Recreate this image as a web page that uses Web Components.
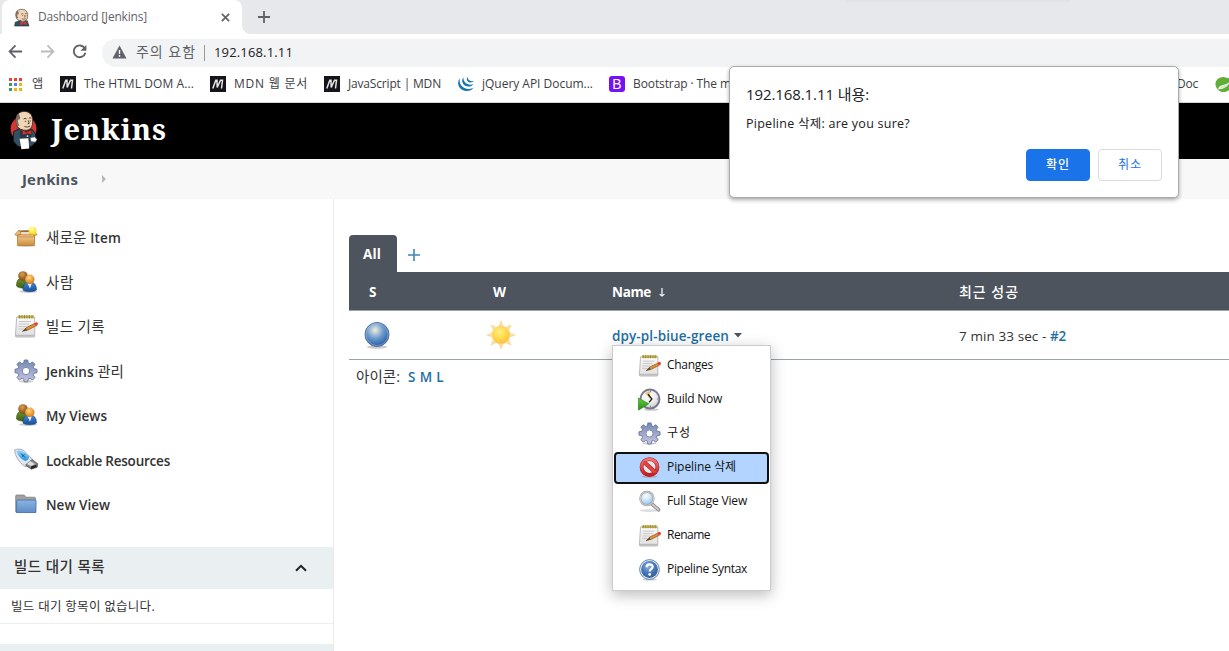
<!DOCTYPE html>
<html lang="ko"><head><meta charset="utf-8"><title>Dashboard [Jenkins]</title>
<style>
html,body{margin:0;width:1229px;height:651px;overflow:hidden;background:#fff}
body{font-family:"Open Sans","Noto Sans CJK KR",sans-serif;font-size:13.5px;color:#333}
</style></head><body>
<jenkins-window></jenkins-window>
<script>
const gearPath='M10.3 1h3.4l.6 3 1.7.7 2.6-1.8 2.4 2.4-1.8 2.6.7 1.7 3.1.7v3.4l-3.1.6-.7 1.7 1.8 2.6-2.4 2.4-2.6-1.8-1.7.7-.6 3h-3.4l-.6-3-1.7-.7-2.6 1.8L3 18.600l1.800-2.600-.7-1.700L1 13.700v-3.400l3.100-.7.7-1.700L3 5.300l2.400-2.400L8 4.700 9.700 4z';
const grad=(id,a,b,extra='x1="0" y1="0" x2="0" y2="1"')=>`<linearGradient id="${id}" ${extra}><stop stop-color="${a}"/><stop offset="1" stop-color="${b}"/></linearGradient>`;
const ball=(id,a,b,c)=>`<radialGradient id="${id}" cx=".42" cy=".32" r=".7"><stop stop-color="${a}"/><stop offset=".5" stop-color="${b}"/><stop offset="1" stop-color="${c}"/></radialGradient>`;
const butlerHead=`<path d="M8.500 18C6 12 6.500 5 10.500 2.200 15-.7 21.500.3 24 4c2.300 3.300 2.300 8.500 1.500 12-.6 3.500-3 6-6.500 6.300-5 .3-9-1.500-10.500-4.300z" fill="#f0d6b7" stroke="#3a2b22" stroke-width="1"/><path d="M8.300 17C5.500 12 6.500 5 10 2.800l1.800 5-1.300 2.400-1.400-.4.300 4 1.400 3.200z" fill="#7d6c60"/><path d="M15.500 9.300q1.800-1.600 3.500-.1M21.500 8.500q1.400-1.300 2.800 0M17 12h1.500M22.500 11.500h1.300M20.800 11l1.200 3.300-1.800.6M16.500 18q3.500 1.600 6.500-.6" stroke="#4a352b" stroke-width="1.100" fill="none"/>`;
const ICONS={
logo:['0 0 32 44',`<circle cx="15.500" cy="20.500" r="14.800" fill="#d33833"/><path d="M4 24l7-4 6 4 8-3 4 5 1 10-6 5H9L4 35z" fill="#335061" stroke="#101820"/><path d="M11 21l8 6 6-5-1 13H12z" fill="#22384a"/>${butlerHead}<path d="M14 22l5 3 5-3 .7 5-5.200-1-5 1.700z" fill="#d33833" stroke="#7d1c19" stroke-width=".6"/><path d="M11 32l10-.5 1 12-9 .7z" fill="#fff"/><path d="M23 31l5-1 3 3-2 3-5-.6z" fill="#fff" stroke="#444" stroke-width=".5"/><circle cx="20" cy="29" r="1" fill="#eee"/>`],
fav:['4 0 24 31',`${butlerHead}<path d="M6 24l8-3 4 3 7-3 3 10H5z" fill="#335061" stroke="#202b32"/><path d="M14 22l5 3 5-3v7l-5-2-5 3z" fill="#d33833"/>`],
close:['0 0 10 10','<path d="M1 1l8 8M9 1l-8 8" stroke="#5f6368" stroke-width="1.900"/>'],
plus:['0 0 12 12','<path d="M6 0v12M0 6h12" stroke="#5f6368" stroke-width="1.800"/>'],
addview:['0 0 12 12','<path d="M6 0v12M0 6h12" stroke="#3d88b4" stroke-width="1.600"/>'],
back:['0 0 16 16','<path d="M15 8H2M8 1.500L1.700 8 8 14.500" fill="none" stroke="#5f6368" stroke-width="1.900"/>'],
fwd:['0 0 16 16','<path d="M1 8h13M8 1.500L14.300 8 8 14.500" fill="none" stroke="#babcbe" stroke-width="1.900"/>'],
reload:['0 0 16 16','<path d="M13.600 4.600A6.300 6.300 0 1 0 14.300 9.300" fill="none" stroke="#5f6368" stroke-width="2"/><path d="M15.300 1v6.300H9z" fill="#5f6368"/>'],
warn:['0 0 16 14','<path d="M8 .5L15.500 13.500H.5z" fill="#5f6368"/><path d="M8 5v4M8 10v1.800" stroke="#fff" stroke-width="1.500"/>'],
apps:['0 0 13 13','<path d="M0 0h3v3H0zM5 0h3v3H5zM10 0h3v3h-3z" fill="#ea4335"/><path d="M0 5h3v3H0zM0 10h3v3H0z" fill="#34a060"/><path d="M5 5h3v3H5z" fill="#4285f4"/><path d="M10 5h3v3h-3zM5 10h3v3H5zM10 10h3v3h-3z" fill="#fbae0b"/>'],
mdn:['0 0 16 16','<path d="M0 0h16v16H0z" fill="#15141a"/><path d="M2.800 12.500L5.800 4.300 7 4.300 7.200 11.500 10.500 4.300 12.500 4.300 11.500 12.500" fill="none" stroke="#e4e4e4" stroke-width="1.500"/>'],
jquery:['0 0 16 16','<g fill="#1876ad"><path d="M1.800 2.300C-1.200 6.500.2 11.500 4 13.800c4 2.300 9.200 1.400 11.800-2.300-3 1.700-6.500 2-9.300.6C2.800 10.200 1 6.700 1.800 2.300z"/><path d="M5.300 1.300C3.300 4.300 4.200 8 7.200 9.800c3 1.600 6.500.8 8.500-1.800-2.200 1-4.300 1-6.200.1C6.700 6.800 5.200 4.500 5.300 1.300z"/><path d="M9.500.8C8.200 2.500 8.600 4.900 10.600 6c1.900 1 4.100.5 5.200-1.200-1.400.5-2.700.5-3.800-.1C10.400 3.900 9.500 2.600 9.500.8z"/></g>'],
spring:['0 0 18 18','<path d="M16.500 1c2 7 .8 14-5 15.700C6 18.300.7 14 .5 8.500.4 3 7-.8 12 1.800c2 .9 3.300.5 4.500-.8z" fill="#5fae35"/><path d="M3.200 14C8.500 14.500 14.500 11.500 16.300 4.800 14 8.500 11 8.800 7.500 9.800c-2.500.8-4 2.200-4.300 4.200z" fill="#fff"/><path d="M5 13.200C9.500 13 13 11 15 7.500 13 9.800 10.500 10.200 8 11c-1.500.5-2.500 1.200-3 2.200z" fill="#5fae35" opacity=".35"/>'],
box:['0 0 24 24',`<defs>${grad('b','#f6d8a8','#cf8b36')}${ball('y','#ffffd0','#fff24d','#f5d400')}</defs><ellipse cx="12" cy="20.500" rx="10" ry="1.500" fill="#ccc"/><path d="M3.500 9h17v10.500q0 1-1 1h-15q-1 0-1-1z" fill="url(#b)" stroke="#b57a35" stroke-width=".8"/><path d="M5 5.500l14-.4 2 5H3z" fill="#9b6a34"/><path d="M7 7h9v3H7z" fill="#e8dcc9"/><path d="M5 5L.7 9.500l3 1.800L7 8zM18 5l5.300 4.500-3 1.800L17 8zM3.500 9.700h17V12h-17z" fill="#e9bb7d" stroke="#bd8542" stroke-width=".7"/><circle cx="18.500" cy="5.700" r="4" fill="url(#y)" opacity=".95"/>`],
people:['0 0 24 24',`<defs>${ball('h1','#d9a25e','#a8702c','#7d4e17')}${ball('h2','#ffd592','#f0a73f','#d07a14')}${grad('g','#73913a','#3d6310')}${grad('u','#4a87cc','#184f9b')}</defs><ellipse cx="14" cy="21.500" rx="9" ry="1.400" fill="#ccc"/><path d="M2.500 16c0-6 2-8 6.500-8 4 0 7 3 7 8-2 2.700-11 3-13.500 0z" fill="url(#g)" stroke="#3d5c12" stroke-width=".6"/><circle cx="9" cy="6" r="4.800" fill="url(#h1)"/><path d="M9 20c0-6 2.500-8 6.800-8 4.500 0 6.700 3 6.700 8-2.300 2.200-11.500 2.200-13.500 0z" fill="url(#u)" stroke="#174783" stroke-width=".6"/><path d="M13.600 13.500h4.200l-1.800 5z" fill="#e4edf8"/><circle cx="15.800" cy="9.300" r="4.700" fill="url(#h2)"/>`],
note:['0 0 24 24',`<defs>${grad('n','#fafafa','#dfdfdf')}</defs><path d="M2.700 3h18v19q0 1-1 1H2.400q-1.200 0-1-1.300z" fill="url(#n)" stroke="#aaa" stroke-width=".8"/><path d="M1.700 20.700h19v1.800h-19z" fill="#bbb"/><path d="M4 1.500h16v2.700H4z" fill="#c4b450"/><path d="M5.500 1v3.500M8 1v3.500M10.500 1v3.500M13 1v3.500M15.500 1v3.500M18 1v3.500" stroke="#8a7d2c" stroke-width=".8"/><path d="M5 7.500h12M5 10h10M4.700 12.500h8M4.500 15h5" stroke="#c2c2c2" stroke-width=".9"/><path d="M8.500 17.300l4.200-4 8.500-4 1.400 2.300-8.500 4.300z" fill="#df8c35" stroke="#875218" stroke-width=".7"/><path d="M8.300 17.400l3.500-3.300 1.400 2.200z" fill="#554a39"/><circle cx="22.300" cy="9.800" r="1.600" fill="#ed3935"/>`],
gear:['0 0 24 24',`<defs>${grad('r','#7189b2','#cac5e5')}</defs><ellipse cx="12" cy="22.400" rx="7" ry="1.300" fill="#ccc"/><path d="${gearPath}" fill="url(#r)" stroke="#667596" stroke-width=".9"/><circle cx="12" cy="12" r="3.700" fill="#fff" stroke="#7c87a7"/>`],
usb:['0 0 24 24',`<defs>${grad('k','#8bd5ff','#2499e0')}</defs><path d="M.6 2Q4 0 9.500 2.300l9.500 9.500-4 6.700-4 .2Q1 11 .6 2z" fill="#e3e5ee" stroke="#9a9bb1" stroke-width=".8"/><path d="M2.500 3q4.500-1.500 8 1.500l4.500 4q0 4-4 4.500Q4 9.500 2.500 3z" fill="url(#k)"/><path d="M7 5.500l4 4M10.500 6.500l-2.500 2" stroke="#155582" stroke-width="1"/><path d="M18 11.500l5.700 4.200-.5 3.500-6 2L11.500 17z" fill="#888" stroke="#444" stroke-width=".7"/><path d="M16 13l5 3-4 2-4-2z" fill="#ddd"/><path d="M17 18.500l5.500-1.700v2.300L17 21z" fill="#222"/>`],
folder:['0 0 24 24',`<defs>${grad('f','#8bb4e0','#5d8ec8')}</defs><path d="M1.700 4q0-1 1-1h7q1 0 1.400 1l.5 1.200h9q.8 0 .8.800v14H1.700z" fill="#a1a1a1" stroke="#777" stroke-width=".7"/><path d="M3.500 8h18.300q.3 0 .3.700l-.2 11.800H2.500L2.800 8.700q.1-.7.700-.7z" fill="url(#f)" stroke="#3e70ad" stroke-width=".8"/>`],
clock:['0 0 24 24',`<defs>${ball('c','#fff','#f0f0ed','#ccccc8')}${grad('t','#65cf3c','#258b12')}</defs><ellipse cx="14" cy="22.500" rx="8" ry="1.200" fill="#ccc"/><circle cx="12.500" cy="11.500" r="9.900" fill="url(#c)" stroke="#777795" stroke-width="2"/><path d="M12.500 11.500L7.500 5.500q2.500-2.200 5-2z" fill="#e6c56a"/><path d="M10.500 6.500l4 5-3 3.500" fill="none" stroke="#222" stroke-width="1.400"/><path d="M13 3v1.600M20 11.500h1.500M13 18.500v1.500" stroke="#777"/><path d="M.5 10.500l10.700 6-10.700 6.600z" fill="url(#t)" stroke="#26841b" stroke-width=".7"/>`],
deny:['0 0 24 24',`<defs>${grad('d','#f27670','#c71e1e')}</defs><ellipse cx="12" cy="21.500" rx="8" ry="1.500" fill="#999" opacity=".6"/><circle cx="12" cy="11.500" r="8.300" fill="#e4e7ef" stroke="#a92020" stroke-width="4"/><path d="M6 6l12 11" stroke="#a92020" stroke-width="4.300"/><circle cx="12" cy="11.500" r="8.300" fill="none" stroke="url(#d)" stroke-width="3"/><path d="M6 6l12 11" stroke="#e04440" stroke-width="3.300"/>`],
lens:['0 0 24 24',`<defs>${ball('l','#fff','#c9e3fa','#82b8ec')}</defs><ellipse cx="12" cy="21.500" rx="10" ry="1.500" fill="#ddd"/><path d="M14 14l7.500 6.700" stroke="#777" stroke-width="3.600" stroke-linecap="round"/><path d="M14 14l7.500 6.700" stroke="#c9c9c9" stroke-width="2.200" stroke-linecap="round"/><circle cx="9.300" cy="8.900" r="7" fill="url(#l)" stroke="#999" stroke-width="2"/><circle cx="9.300" cy="8.900" r="7" fill="none" stroke="#ddd" stroke-width=".9"/>`],
help:['0 0 24 24',`<defs>${ball('q','#8db3df','#4c7dba','#2e5d9c')}</defs><ellipse cx="12" cy="22.500" rx="8" ry="1" fill="#ccc"/><circle cx="12" cy="12" r="10.300" fill="#eef3fa" stroke="#456f9f" stroke-width=".9"/><circle cx="12" cy="12" r="8.800" fill="url(#q)"/><path d="M9 9.700c0-4 6.300-4 6.300-.6 0 2.500-3 2.600-3 4.900" fill="none" stroke="#fff" stroke-width="2.300"/><circle cx="12.200" cy="17.100" r="1.400" fill="#fff"/>`],
ball:['0 0 32 32',`<defs>${ball('a','#eef1dc','#6c98cf','#2358a0')}</defs><ellipse cx="16" cy="28" rx="10" ry="1.800" fill="#ccc"/><circle cx="16" cy="15.500" r="12" fill="url(#a)" stroke="#4f6f9c"/><circle cx="16" cy="15.500" r="11" fill="none" stroke="#a8c3e4" stroke-width=".7" opacity=".7"/>`],
sun:['0 0 32 32',`<defs>${ball('s','#fff08a','#ffdc4c','#fbc046')}</defs><g fill="#fbdfa2" stroke="#f8d388" stroke-width=".5">${[0,45,90,135,180,225,270,315].map(a=>`<path transform="rotate(${a} 16 16)" d="M16 1.700l2 5h-4z"/>`).join('')}</g><circle cx="16" cy="16" r="8.900" fill="url(#s)" stroke="#f9cf70" stroke-width=".8"/>`],
chev:['0 0 12 8','<path d="M1 6.800L6 1.800l5 5" fill="none" stroke="#222" stroke-width="2"/>'],
crumb:['0 0 4 8','<path d="M0 0l4 4-4 4z" fill="#b9b9b9"/>'],
caret:['0 0 8 5','<path d="M0 0h8L4 4.500z" fill="#4d545d"/>'],
sort:['0 0 6 10','<path d="M3 0v8.500M.6 6.800L3 9l2.400-2.200" fill="none" stroke="#fff" stroke-width="1.200"/>']
};
const define=(name,html,after)=>customElements.define(name,class extends HTMLElement{
 connectedCallback(){ if(this.shadowRoot)return; this.attachShadow({mode:'open'}).innerHTML=typeof html==='function'?html(this):html; if(after)after(this);}
});
define('ui-icon',e=>{const[v,b]=ICONS[e.getAttribute('name')];return `<style>:host{display:block;flex:none;width:${e.getAttribute('w')}px;height:${e.getAttribute('h')||e.getAttribute('w')}px}svg{display:block;width:100%;height:100%;overflow:visible}</style><svg viewBox="${v}" preserveAspectRatio="none">${b}</svg>`});
/* Single-line label that tracks its letters to the requested width. */
define('ui-label','<style>:host{display:block;flex:none;white-space:pre}span{display:inline-block}</style><span><slot></slot></span>',e=>{
 const s=e.shadowRoot.querySelector('span'),w=+e.getAttribute('w'),n=[...e.textContent].length;
 if(w){s.style.letterSpacing=((w-s.getBoundingClientRect().width)/n)+'px';e.style.width=w+'px';}
});
define('book-mark',e=>`<style>:host{display:flex;align-items:center;flex:none;font-size:12px;color:#3c4043}ui-label{margin-top:-2px}ui-icon,.bs{margin-right:${e.getAttribute('gap')||8}px}.bs{width:16px;height:16px;border-radius:3px;background:#7610f5;color:#fff;font:14px/16px "Liberation Sans",sans-serif;text-align:center}</style>${e.getAttribute('icon')==='bs'?'<div class="bs">B</div>':`<ui-icon name="${e.getAttribute('icon')}" w="${e.getAttribute('s')||16}"></ui-icon>`}<ui-label w="${e.getAttribute('w')}">${e.getAttribute('label')}</ui-label>`);
define('browser-chrome',`<style>
:host{display:block;height:103px;background:#fff;font-size:12px}
.tabs{height:34px;background:linear-gradient(#e0e1e5,#e7e8ec00 3px) 845px 0/225px 3px no-repeat,#e7e8ec;display:flex;padding-left:2px}
.tab{width:240px;height:34px;box-sizing:border-box;background:#fff;border-radius:8px 8px 0 0;display:flex;align-items:center;padding:0 12px 0 12px;color:#5f6368}
.tab ui-label{margin:-1px auto 0 9px}
.foot{align-self:flex-end;width:8px;height:8px;background:radial-gradient(circle at 100% 0,#e7e8ec 7.500px,#fff 8px)}
.tabs>ui-icon{margin:11px 0 0 8px}
.bar{height:34px;display:flex;align-items:center;padding-left:8px;padding-top:1px;box-sizing:border-box}
.url{flex:1;height:28px;margin-top:2px;background:#f1f3f4;border-radius:14px 0 0 14px;margin-left:14px;display:flex;align-items:center;padding-left:10px;font-size:13px;color:#5f6368}
.url ui-label{margin-top:-2px}.url .ko{font-size:14px;margin-top:-4px}
.sep{width:1px;height:16px;background:#999;margin:0 9px 0 8px}
.addr{color:#202124}
.marks{display:flex;align-items:center;padding-left:9px;box-sizing:border-box;padding-bottom:2px;overflow:hidden;border-bottom:1px solid #d3d6d8;height:35px}
</style>
<div class="tabs"><div class="tab"><ui-icon name="fav" w="15" h="17"></ui-icon><ui-label w="109">Dashboard [Jenkins]</ui-label><ui-icon name="close" w="9"></ui-icon></div><div class="foot"></div><ui-icon name="plus" w="12"></ui-icon></div>
<div class="bar"><ui-icon name="back" w="15"></ui-icon><ui-icon name="fwd" w="15" style="margin-left:17px"></ui-icon><ui-icon name="reload" w="15" style="margin-left:17px;margin-right:1px"></ui-icon><div class="url"><ui-icon name="warn" w="15" h="14" style="margin:-2px 9px 0 0"></ui-icon><ui-label class="ko" w="60">주의 요함</ui-label><div class="sep"></div><ui-label class="addr" w="79">192.168.1.11</ui-label></div></div>
<div class="marks">
<book-mark icon="apps" s="13" gap="10" label="앱" w="12"></book-mark>
<book-mark style="margin-left:16px" icon="mdn" label="The HTML DOM A..." w="110"></book-mark>
<book-mark style="margin-left:16px" icon="mdn" label="MDN 웹 문서" w="74"></book-mark>
<book-mark style="margin-left:16px" icon="mdn" label="JavaScript | MDN" w="93"></book-mark>
<book-mark style="margin-left:17px" icon="jquery" label="jQuery API Docum..." w="111"></book-mark>
<book-mark style="margin-left:16px" icon="bs" label="Bootstrap · The m" w="98"></book-mark>
<book-mark style="margin-left:446px" icon="spring" s="0" gap="0" label="Doc" w="21"></book-mark>
<ui-icon name="spring" w="17" style="margin-left:17px"></ui-icon>
</div>`);
define('app-header',`<style>:host{display:block}
.top{height:56px;background:#000;display:flex;align-items:center;padding-left:10px;color:#fff;font:bold 29px "Noto Serif","DejaVu Serif","Liberation Serif",serif}
ui-icon{margin-top:-2px}.top ui-label{margin:-5px 0 0 13px}
.crumb{height:40px;background:#f8f8f8;display:flex;align-items:center;padding-left:22px;color:#4d545d;font-weight:700;font-size:15px}
.crumb ui-icon{margin:0 0 0 24px}</style>
<div class="top"><ui-icon name="logo" w="28" h="38"></ui-icon><ui-label w="116">Jenkins</ui-label></div>
<div class="crumb"><ui-label w="56">Jenkins</ui-label><ui-icon name="crumb" w="4" h="8"></ui-icon></div>`);
define('side-task',e=>`<style>:host{display:flex;height:44.500px;align-items:center;padding-left:14px;font-size:13.5px;font-weight:600;color:#333}ui-label{margin:2px 0 0 8px;height:20px;line-height:20px}i{font-style:normal;font-weight:400;font-size:14.5px}</style><ui-icon name="${e.getAttribute('icon')}" w="24"></ui-icon><ui-label w="${e.getAttribute('w')}"><slot></slot>${e.getAttribute('label')}</ui-label>`);
define('side-panel',`<style>:host{display:block;width:333px;height:452px;border-right:1px solid #eaeaea;flex:none;overflow:hidden}
nav{padding-top:16px;height:332px;box-sizing:content-box}
.h{height:42px;background:#eaeff2;display:flex;align-items:center;justify-content:space-between;padding:0 26px 3px 14px;box-sizing:border-box;font-size:14.5px;font-weight:500;color:#333}
.h ui-label{margin-top:-2px}
.row{height:34px;display:flex;align-items:center;padding-left:11px;font-size:12.5px;border-bottom:1px solid #eaeff2}
.row ui-label{margin-top:-2px}
.next{height:10px;background:#eaeff2;margin-top:20px}</style>
<nav><side-task icon="box" w="75" label="<i>새로운</i> Item"></side-task><side-task icon="people" w="28" label="<i>사람</i>"></side-task><side-task icon="note" w="59" label="<i>빌드 기록</i>"></side-task><side-task icon="gear" w="78" label="Jenkins <i>관리</i>"></side-task><side-task icon="people" w="61" label="My Views"></side-task><side-task icon="usb" w="124" label="Lockable Resources"></side-task><side-task icon="folder" w="64" label="New View"></side-task></nav>
<div class="h"><ui-label w="91">빌드 대기 목록</ui-label><ui-icon name="chev" w="12" h="8" style="margin-top:3px"></ui-icon></div>
<div class="row"><ui-label w="144">빌드 대기 항목이 없습니다.</ui-label></div><div class="next"></div>`);
define('menu-entry',e=>`<style>:host{display:flex;height:34px;align-items:center;box-sizing:border-box;padding-left:25px;font-size:12px;color:#111}
:host([active]){background:#b3d4ff;border:2px solid #101010;border-radius:4px;height:32px;margin:1px;padding-left:22px}ui-label{margin:-3px 0 0 6px}</style><ui-icon name="${e.getAttribute('icon')}" w="23"></ui-icon><ui-label w="${e.getAttribute('w')}">${e.getAttribute('label')}</ui-label>`);
define('context-menu',`<style>:host{display:block;box-sizing:border-box;width:159px;height:246px;background:#fff;border:1px solid #ccc;box-shadow:0 4px 14px #0004;padding-top:3px}</style>
<menu-entry icon="note" label="Changes" w="46"></menu-entry><menu-entry icon="clock" label="Build Now" w="55"></menu-entry><menu-entry icon="gear" label="구성" w="24"></menu-entry><menu-entry active icon="deny" label="Pipeline 삭제" w="69"></menu-entry><menu-entry icon="lens" label="Full Stage View" w="80"></menu-entry><menu-entry icon="note" label="Rename" w="43"></menu-entry><menu-entry icon="help" label="Pipeline Syntax" w="80"></menu-entry>`);
define('project-view',`<style>:host{display:block;flex:1;padding:36px 0 0 15px;min-width:0}
.tabs{display:flex;height:37px;align-items:center}.tab{width:48px;height:37px;background:#4d545d;border-radius:4px 4px 0 0;color:#fff;font-weight:700;display:flex;align-items:center;justify-content:center;box-sizing:border-box;padding-right:2px}
.tabs ui-icon{margin:3px 0 0 11px}
.head,.row{display:grid;grid-template-columns:136px 127px 347px 1fr;align-items:center;box-sizing:border-box;border-bottom:1px solid #98a3ab}
.head{height:39px;background:#4d545d;color:#fff;font-weight:700;padding-top:1px}
.row{height:49px}.cell{display:flex;align-items:center}.name{position:relative;gap:5px}
.cell ui-label{margin-top:1px}
.ko{font-size:14px;font-weight:500}
a{color:#1d6fa5;font-weight:600}
context-menu{position:absolute;left:0;top:19px;z-index:2}
.foot{display:flex;padding:7px 0 0 7px;gap:8px}.foot ui-label{height:20px;line-height:20px}.foot .ko{font-weight:400;font-size:14.5px}</style>
<div class="tabs"><div class="tab"><ui-label w="18">All</ui-label></div><ui-icon name="addview" w="12"></ui-icon></div>
<div class="head"><ui-label style="margin-left:20px" w="9">S</ui-label><ui-label style="margin-left:8px" w="15">W</ui-label><div class="cell"><ui-label w="39">Name</ui-label><ui-icon name="sort" w="6" h="9" style="margin:2px 0 0 8px"></ui-icon></div><ui-label class="ko" w="60" style="margin-top:-2px">최근 성공</ui-label></div>
<div class="row"><ui-icon name="ball" w="32" style="margin-left:12px"></ui-icon><ui-icon name="sun" w="32"></ui-icon><div class="cell name"><a><ui-label w="117">dpy-pl-biue-green</ui-label></a><ui-icon name="caret" w="8" h="5"></ui-icon><context-menu></context-menu></div><div class="cell"><ui-label w="91">7 min 33 sec - </ui-label><a><ui-label w="16">#2</ui-label></a></div></div>
<div class="foot"><ui-label class="ko" w="44">아이콘:</ui-label><a><ui-label w="36">S M L</ui-label></a></div>`);
define('confirm-dialog',`<style>:host{display:block;box-sizing:border-box;width:450px;height:132px;background:#fff;border:1px solid #aaa;border-radius:5px;box-shadow:0 2px 4px #0005;padding:17px 16px 16px;color:#202124}
.t{font-size:15px;line-height:21px}.m{font-size:12.500px;line-height:18px;margin-top:10px}
.b{display:flex;justify-content:flex-end;gap:8px;margin-top:16px}button{width:64px;height:32px;padding:0 0 3px;border-radius:4px;font:400 12px "Noto Sans CJK KR",sans-serif;display:flex;align-items:center;justify-content:center}
.ok{background:#1a73e8;border:1px solid #1a73e8;color:#fff;font-weight:500}.no{background:#fff;border:1px solid #dadce0;color:#1a73e8}</style>
<ui-label class="t" w="123">192.168.1.11 내용:</ui-label><ui-label class="m" w="164">Pipeline 삭제: are you sure?</ui-label><div class="b"><button class="ok"><ui-label w="24">확인</ui-label></button><button class="no"><ui-label w="24">취소</ui-label></button></div>`);
define('jenkins-window',`<style>:host{display:block;position:relative;width:1229px;height:651px;overflow:hidden;background:#fff}main{display:flex;height:452px}confirm-dialog{position:absolute;left:729px;top:66px;z-index:5}</style><browser-chrome></browser-chrome><app-header></app-header><main><side-panel></side-panel><project-view></project-view></main><confirm-dialog></confirm-dialog>`);
</script></body></html>
